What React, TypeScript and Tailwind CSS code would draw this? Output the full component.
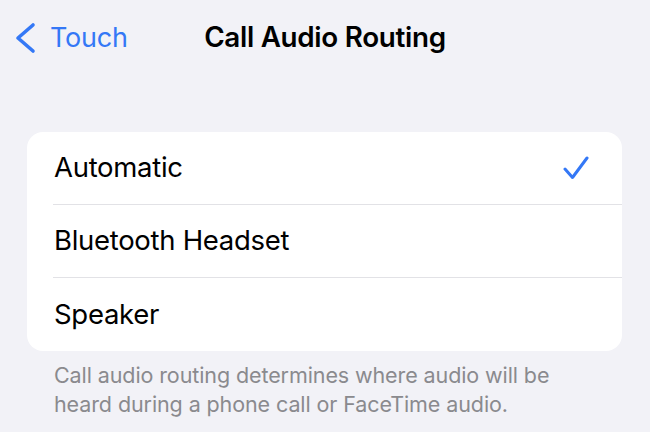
const rows = [
  { label: "Automatic", checked: true },
  { label: "Bluetooth Headset", checked: false },
  { label: "Speaker", checked: false },
];

export default function App() {
  return (
    <main
      className="w-[650px] h-[432px] overflow-hidden bg-[#f2f2f7] text-black"
      style={{ fontFamily: 'Inter, "Liberation Sans", sans-serif' }}
    >
      <nav className="relative h-[76px] flex items-center">
        <a className="flex items-center pl-[13px] gap-[13px] text-[#3478f6] text-[27px] tracking-[-0.2px]">
          <svg width="24" height="32" viewBox="0 0 24 32" fill="none">
            <path d="M20 3 L5 16 L20 29" stroke="#3478f6" strokeWidth="3.6" strokeLinecap="round" strokeLinejoin="round" />
          </svg>
          <span>Touch</span>
        </a>
        <h1 className="absolute left-0 right-0 text-center font-semibold text-[27.8px] tracking-[-0.3px] pointer-events-none">
          Call Audio Routing
        </h1>
      </nav>

      <div className="mt-[56px] ml-[27px] mr-[28px] bg-white rounded-[16px] overflow-hidden">
        {rows.map((r, i) => (
          <div key={r.label} className="h-[73px] flex flex-col">
            <div className="flex-1 flex items-center justify-between pl-[27px] pr-[33px]">
              <span className="text-[27.5px] tracking-[-0.3px]">{r.label}</span>
              {r.checked && (
                <svg width="26" height="26" viewBox="0 0 26 26" fill="none">
                  <path d="M2 14 L9.5 22.5 L24 3" stroke="#3478f6" strokeWidth="3" strokeLinecap="round" strokeLinejoin="round" />
                </svg>
              )}
            </div>
            {i < rows.length - 1 && <div className="ml-[26px] h-px bg-[#e2e2e6]" />}
          </div>
        ))}
      </div>

      <p className="mt-[10px] pl-[54px] pr-[60px] text-[21.5px] leading-[29px] text-[#8a8a8e] tracking-[-0.1px]">
        Call audio routing determines where audio will be heard during a phone call or FaceTime audio.
      </p>
    </main>
  );
}
